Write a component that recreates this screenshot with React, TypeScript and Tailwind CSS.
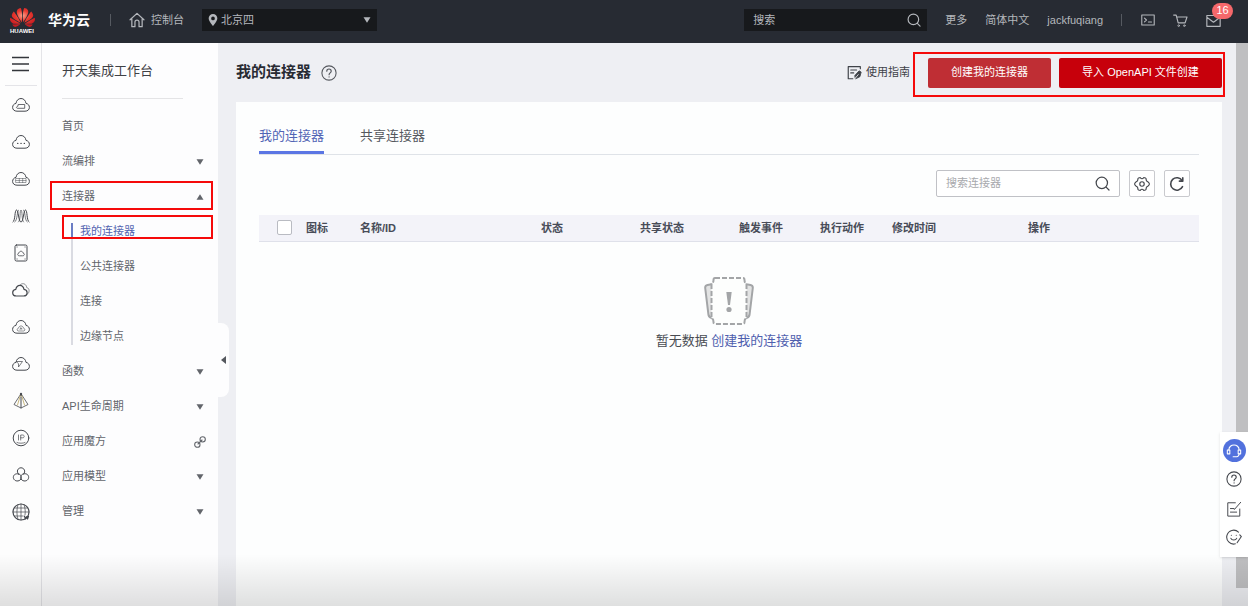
import type { ReactNode } from "react";
import { SiHuawei } from "react-icons/si";

type IconProps = { className?: string; children?: ReactNode };

function Icon({ className = "size-[18px]", children }: IconProps) {
  return (
    <svg
      viewBox="0 0 18 18"
      className={className}
      fill="none"
      stroke="currentColor"
      strokeWidth="1"
      strokeLinecap="round"
      strokeLinejoin="round"
      aria-hidden="true"
    >
      {children}
    </svg>
  );
}

const cloud =
  "M4.600 15.200C2.200 15.200.6 13.500.6 11.400 .6 9.300 2 7.700 4 7.400 4.400 4.400 6.400 2.500 9 2.500S13.600 4.400 14 7.400C16 7.700 17.400 9.300 17.400 11.400 17.400 13.500 15.800 15.200 13.400 15.200Z";

const services = [
  {
    name: "弹性云服务器",
    icon: (
      <>
        <path d={cloud} />
        <path d="M6.500 8.500h6.200v3.800H5.500c-1.400 0-1.400-1.900 0-2z" strokeWidth=".8" />
      </>
    ),
  },
  {
    name: "云耀服务器",
    icon: (
      <>
        <path d={cloud} />
        <path d="M5.700 10.400h.1M9 10.400h.1M12.300 10.400h.1" strokeWidth="1.400" />
      </>
    ),
  },
  {
    name: "裸金属服务器",
    icon: (
      <>
        <path d={cloud} />
        <path d="M4 8.500h10v4H4zM7.300 8.500v4M10.700 8.500v4M4 10.500h10" strokeWidth=".5" />
      </>
    ),
  },
  {
    name: "弹性伸缩",
    icon: (
      <>
        <path d="M1 15c2.500-1 1.500-12 3.500-12S6.500 15 9 15s2.500-12 4.500-12S14.500 14 17 15" />
        <path d="M2.800 15C5.500 14 5 3 6.500 3M6.500 15C9 13.500 7.500 3 9 3s.5 10.500 2.500 12M11.500 3c2 0 1 11 3.700 12" strokeWidth=".7" />
      </>
    ),
  },
  {
    name: "镜像服务",
    icon: (
      <>
        <rect x="3" y="1" width="12" height="16" rx="1.500" />
        <path d="M7 11.800c-1.800 0-1.800-2.500-.1-2.700.5-2.500 3.700-2.500 4.200 0 1.700.2 1.700 2.700-.1 2.700z" strokeWidth=".8" />
        <path d="M5 3h.1M13 3h.1M5 15h.1M13 15h.1" />
      </>
    ),
  },
  {
    name: "云硬盘",
    icon: (
      <>
        <path d="M4.200 15C-.4 15-.4 8.900 3.800 8.400 4.800 2.900 11 2.900 12 8.400 16.200 8.900 16.200 15 11.600 15Z" strokeWidth="1.200" />
        <path d="M8.500 3.500c2.500-2 5.700-.5 6.200 3 3.200.8 3.200 5.500.4 6.800" strokeWidth=".6" />
      </>
    ),
  },
  {
    name: "对象存储",
    icon: (
      <>
        <path d={cloud} />
        <path d="M7.500 13h-1c-1.800 0-1.800-2.600 0-2.800.5-3 4.500-3 5 0 1.800.2 1.800 2.800 0 2.800h-1M9 13.500V10M7.800 11 9 9.800l1.200 1.200" strokeWidth=".6" />
      </>
    ),
  },
  {
    name: "内容分发",
    icon: (
      <>
        <path d={cloud} />
        <path d="M4.500 6.500h6L6.500 12V9z" strokeWidth=".7" />
      </>
    ),
  },
  {
    name: "虚拟私有云",
    icon: (
      <>
        <path d="M8.500 2.500 2 12.500 9 16l7-3.500-6.500-10" strokeWidth=".8" />
        <path d="m8.500 3-3 10M9.500 3l3 10" stroke="#c2b070" strokeWidth=".9" />
        <path d="M9 5v11" strokeWidth="1" />
        <path d="M9 1.800v1" strokeWidth="2.200" />
      </>
    ),
  },
  {
    name: "弹性公网IP",
    icon: (
      <>
        <circle cx="9" cy="9" r="7.800" />
        <path d="M6.500 11v-5M8.700 11v-5h2c2 0 2 2.800 0 2.800h-2M5 13.500c2 1 6 1 8 0" strokeWidth=".7" />
      </>
    ),
  },
  {
    name: "应用模型",
    icon: (
      <path d="M6.500 8C4 5.500 5.800 1.800 9 1.800S14 5.500 11.500 8C15 6.800 17.300 9.800 16.500 12.300 15.500 15.500 11 16 9 13 7 16 2.500 15.500 1.500 12.300.7 9.800 3 6.800 6.500 8ZM9 13C8.300 11.500 8.700 10.700 9 10.200 9.300 10.700 9.700 11.500 9 13ZM6.500 8C8 8 8.700 9 9 10.200 9.300 9 10 8 11.500 8" />
    ),
  },
  {
    name: "域名注册",
    icon: (
      <>
        <circle cx="9" cy="9" r="8" strokeWidth="1.200" />
        <path d="M6 1.700C4.500 6 4.500 12 6 16.300M12 1.700c1.300 3.600 1.500 7 1 10.300M9 1v16M1 9h16M2.200 5h13.600M2.200 13h9" strokeWidth=".7" />
        <path d="m12.500 13.200 1 2.800 1-2.300 1 2.300 1-2.800" strokeWidth="1.200" />
      </>
    ),
  },
];

const connectorLinks = ["我的连接器", "公共连接器", "连接", "边缘节点"];

const columns = [
  { label: "图标", width: "w-[54px]" },
  { label: "名称/ID", width: "w-[181px]" },
  { label: "状态", width: "w-[99px]" },
  { label: "共享状态", width: "w-[99px]" },
  { label: "触发事件", width: "w-[81px]" },
  { label: "执行动作", width: "w-[72px]" },
  { label: "修改时间", width: "w-[136px]" },
  { label: "操作", width: "" },
];

function Caret({ up = false }: { up?: boolean }) {
  return (
    <svg viewBox="0 0 8 6" className="h-1.5 w-2" fill="currentColor" aria-hidden="true">
      <path d={up ? "M4 .3 7.500 5.700h-7z" : "M.5.3h7L4 5.700z"} />
    </svg>
  );
}

function SearchIcon({ className }: IconProps) {
  return (
    <Icon className={className}>
      <circle cx="8.200" cy="8.200" r="6.800" strokeWidth="1.500" />
      <path d="m13.300 13.300 3.500 3.500" strokeWidth="1.500" />
    </Icon>
  );
}

function HelpIcon({ className }: IconProps) {
  return (
    <Icon className={className}>
      <circle cx="9" cy="9" r="8" strokeWidth="1.200" />
      <path d="M6.500 7c0-3.400 5-3.300 5-.1 0 1.900-2.400 2-2.400 4M9.100 13.200v.2" strokeWidth="1.300" />
    </Icon>
  );
}

function Highlight({ className }: { className: string }) {
  return <span className={`pointer-events-none absolute border-2 border-[#f50a0a] ${className}`} />;
}

function TopBar() {
  return (
    <header className="flex h-[43px] shrink-0 items-center bg-[#272b33] pb-[3px] text-[11px] text-[#b4b7bc]">
      <a href="#" className="ml-2 flex w-7 flex-col items-center" aria-label="HUAWEI">
        <svg className="absolute size-0" aria-hidden="true">
          <defs>
            <radialGradient id="petal" cx="50%" cy="40%" r="60%">
              <stop offset="0" stopColor="#f9a08a" />
              <stop offset=".45" stopColor="#ea3b30" />
              <stop offset="1" stopColor="#c41920" />
            </radialGradient>
          </defs>
        </svg>
        <SiHuawei className="-mb-1 size-[25px]" fill="url(#petal)" />
        <span className="text-[6px] leading-[10px] font-bold text-white">HUAWEI</span>
      </a>
      <a href="#" className="ml-3 text-[14px] font-bold text-white">
        华为云
      </a>
      <span className="ml-5 h-3 w-px bg-[#565a61]" />
      <a href="#" className="ml-[18px] flex items-center gap-1.5">
        <Icon className="size-4">
          <path d="M1.200 8.800 9 1.500l7.800 7.300M3.200 7.500v9h3.500v-5c0-3 4.600-3 4.600 0v5h3.500v-9" strokeWidth="1.400" />
        </Icon>
        控制台
      </a>
      <div className="relative ml-[18px] flex h-[22px] w-[175px] items-center bg-[#17191c]">
        <svg viewBox="0 0 10 13" className="absolute left-1.5 h-3 w-2.5" fill="currentColor" aria-hidden="true">
          <path fillRule="evenodd" d="M5 0a4.700 4.700 0 0 1 4.700 4.700C9.700 8 5 13 5 13S.3 8 .3 4.700A4.700 4.700 0 0 1 5 0m0 2.800a2 2 0 1 0 0 4 2 2 0 0 0 0-4" />
        </svg>
        <select aria-label="区域" className="h-full w-full appearance-none bg-transparent pl-[19px] outline-none">
          <option>北京四</option>
        </select>
        <span className="pointer-events-none absolute right-1.5">
          <Caret />
        </span>
      </div>
      <div className="ml-auto flex h-[22px] w-[183px] items-center bg-[#17191c] pr-1.5 pl-[9px]">
        <input
          type="search"
          aria-label="搜索"
          placeholder="搜索"
          className="min-w-0 flex-1 bg-transparent outline-none placeholder:text-[#b4b7bc]"
        />
        <button type="button" aria-label="搜索">
          <SearchIcon className="size-3.5" />
        </button>
      </div>
      <a href="#" className="ml-[18px]">更多</a>
      <a href="#" className="ml-[18px]">简体中文</a>
      <a href="#" className="ml-[18px]">jackfuqiang</a>
      <span className="ml-[18px] h-3 w-px bg-[#565a61]" />
      <button type="button" aria-label="CloudShell" className="ml-[19px]">
        <Icon className="size-3.5">
          <path d="M1 2.500h16v13H1zM4.500 6.500 7 9l-2.500 2.500M9.500 11.500h4" strokeWidth="1.400" />
        </Icon>
      </button>
      <a href="#" aria-label="购物车" className="ml-[18px]">
        <Icon className="size-[15px]">
          <path d="M.8 2.500h3l2.400 9.300h8.300l2.300-7H4.500" strokeWidth="1.400" />
          <circle cx="6.800" cy="15.200" r="1" />
          <circle cx="13.600" cy="15.200" r="1" />
        </Icon>
      </a>
      <a href="#" aria-label="消息" className="relative mr-[27px] ml-[18px]">
        <Icon className="size-[15px]">
          <path d="M1 3h16v13H1zM1 5l8 6 8-6" strokeWidth="1.400" />
        </Icon>
        <span className="absolute -top-2.5 left-1.5 flex h-4 w-[21px] items-center justify-center rounded-full bg-[#f5686b] text-[11px] text-white">
          16
        </span>
      </a>
    </header>
  );
}

function ServiceRail() {
  return (
    <aside className="flex w-[42px] shrink-0 flex-col items-center border-r border-[#e4e4e8] bg-[#fdfdfd] text-[#45484e]">
      <button type="button" aria-label="服务列表" className="flex h-[43px] w-8 items-center justify-center border-b border-[#e4e4e8] text-[#33363b]">
        <svg viewBox="0 0 18 16" className="h-4 w-[18px]" stroke="currentColor" strokeWidth="1.700" aria-hidden="true">
          <path d="M0 1.500h17M0 8h17M0 14.500h17" />
        </svg>
      </button>
      <ul>
        {services.map((service) => (
          <li key={service.name}>
            <a href="#" aria-label={service.name} className="flex h-[37px] items-center">
              <Icon>{service.icon}</Icon>
            </a>
          </li>
        ))}
      </ul>
    </aside>
  );
}

function MenuItem({ label, mark, children }: { label: string; mark?: ReactNode; children?: ReactNode }) {
  return (
    <a href="#" className="relative flex h-[35px] items-center justify-between pr-3 pl-5">
      {label}
      <span className="flex w-3 justify-center">{mark}</span>
      {children}
    </a>
  );
}

function SideMenu() {
  return (
    <aside className="relative w-44 shrink-0 bg-[#fdfdfe] text-[11px] text-[#62656b]">
      <h2 className="mr-[35px] ml-5 flex h-14 items-center border-b border-[#e4e4e6] text-[13px] text-[#3f4146]">
        开天集成工作台
      </h2>
      <nav className="mt-2.5">
        <MenuItem label="首页" />
        <MenuItem label="流编排" mark={<Caret />} />
        <MenuItem label="连接器" mark={<Caret up />}>
          <Highlight className="top-[2px] right-[5px] left-2 h-[29px]" />
        </MenuItem>
        <div className="flex pl-[29px]">
          <div className="my-[9px] w-0.5 bg-[#dadbe2]">
            <div className="h-4 bg-[#6a7cc4]" />
          </div>
          <ul className="flex-1">
            {connectorLinks.map((label, i) => (
              <li key={label} className="relative">
                <a
                  href="#"
                  className={i === 0 ? "flex h-[35px] items-center pl-[7px] text-[#5264b0]" : "flex h-[35px] items-center pl-[7px]"}
                >
                  {label}
                </a>
                {i === 0 && <Highlight className="top-px right-[5px] -left-[11px] h-6" />}
              </li>
            ))}
          </ul>
        </div>
        <MenuItem label="函数" mark={<Caret />} />
        <MenuItem label="API生命周期" mark={<Caret />} />
        <MenuItem
          label="应用魔方"
          mark={
            <Icon className="size-3">
              <circle cx="5" cy="13" r="4" strokeWidth="1.600" />
              <circle cx="13" cy="5" r="4" strokeWidth="1.600" />
              <path d="m6 12 6-6" strokeWidth="1.600" />
            </Icon>
          }
        />
        <MenuItem label="应用模型" mark={<Caret />} />
        <MenuItem label="管理" mark={<Caret />} />
      </nav>
      <button
        type="button"
        aria-label="收起菜单"
        className="absolute top-[280px] -right-[11px] flex h-[74px] w-[11px] items-center justify-center rounded-r-lg bg-[#fdfdfe]"
      >
        <svg viewBox="0 0 5 8" className="h-2 w-[5px]" fill="#55585e" aria-hidden="true">
          <path d="M5 0v8L0 4z" />
        </svg>
      </button>
    </aside>
  );
}

function PageHeader() {
  return (
    <div className="flex h-[59px] items-center">
      <h1 className="text-[15px] font-bold text-[#282b33]">我的连接器</h1>
      <button type="button" aria-label="帮助" className="ml-2.5 text-[#55585e]">
        <HelpIcon className="size-4" />
      </button>
      <a href="#" className="mr-[18px] ml-auto flex items-center gap-1 text-[11px] text-[#3f4248]">
        <Icon className="size-[15px]">
          <path d="M16 4.500V2H1.500v14.500h5.500M4.500 6h7M4.500 9.500H8" strokeWidth="1.400" />
          <path d="m9.500 12.500 5-5.500 2.500 1.500-1.500 5.500-5 2.500z" fill="currentColor" />
          <path d="m9 17 4.500-5.500" stroke="#eeeff3" />
        </Icon>
        使用指南
      </a>
      <div className="relative flex gap-2 text-[11px] text-white">
        <button type="button" className="h-[30px] w-[123px] rounded-xs bg-[#bf2e34]">
          创建我的连接器
        </button>
        <button type="button" className="h-[30px] w-[163px] rounded-xs bg-[#c7000b]">
          导入 OpenAPI 文件创建
        </button>
        <Highlight className="-top-1.5 -right-[3px] -bottom-[9px] -left-[15px]" />
      </div>
    </div>
  );
}

function ConnectorTable() {
  return (
    <table className="mt-[18px] w-full table-fixed text-left text-[11px]">
      <thead>
        <tr className="h-[26px] border-b border-[#dfe1ea] bg-[#f3f3f9] text-[#484c58]">
          <th className="w-[47px] pl-[18px]">
            <input
              type="checkbox"
              aria-label="全选"
              className="block size-[15px] appearance-none rounded-xs border border-[#b9bbc2] bg-white"
            />
          </th>
          {columns.map((column) => (
            <th key={column.label} className={`font-bold ${column.width}`}>
              {column.label}
            </th>
          ))}
        </tr>
      </thead>
      <tbody>
        <tr>
          <td colSpan={9} className="pt-[34px] text-center text-[13px] text-[#494c52]">
            <svg viewBox="0 0 50 50" className="mx-auto mb-[5px] size-[50px]" fill="none" stroke="#a3a5a7" strokeWidth="2" aria-hidden="true">
              <path d="M9 8 3.500 9Q1 9.500 1.200 12l3.300 27q.5 2.500 4.500 3.500zM41 8l5.500 1q2.500.5 2.300 3l-3.300 27q-.5 2.500-4.500 3.500z" fill="#e2e3e3" />
              <path
                d="M11 2h28q1.500 0 1.500 2 0 3 2 4v34q-2 1-2 4 0 2-1.500 2H11q-1.500 0-1.500-2 0-3-2-4V8q2-1 2-4 0-2 1.500-2z"
                fill="#fdfefd"
                strokeDasharray="5 2"
              />
              <path d="M22.300 16h5.400l-1.700 13h-2z" fill="#a3a5a7" stroke="none" />
              <circle cx="25" cy="33.500" r="2.600" fill="#a3a5a7" stroke="none" />
            </svg>
            暂无数据{" "}
            <a href="#" className="text-[#4f60ae]">
              创建我的连接器
            </a>
          </td>
        </tr>
      </tbody>
    </table>
  );
}

function ConnectorPanel() {
  return (
    <section className="flex-1 bg-[#fdfefe] px-[23px]">
      <div role="tablist" className="flex h-[53px] items-end gap-9 border-b border-[#dfe3e8] text-[13px]">
        <button type="button" role="tab" aria-selected="true" className="h-[34px] border-b-3 border-[#5b76e4] text-[#5265b5]">
          我的连接器
        </button>
        <button type="button" role="tab" aria-selected="false" className="h-[34px] border-b-3 border-transparent text-[#55585e]">
          共享连接器
        </button>
      </div>
      <div className="mt-[15px] mr-[9px] flex justify-end gap-[9px] text-[#44474d]">
        <div className="flex h-[27px] w-[184px] items-center rounded-xs border border-[#c0c1c6] bg-white px-[9px] text-[11px]">
          <input
            type="search"
            aria-label="搜索连接器"
            placeholder="搜索连接器"
            className="min-w-0 flex-1 outline-none placeholder:text-[#a8a9ad]"
          />
          <button type="button" aria-label="搜索">
            <SearchIcon className="size-[15px]" />
          </button>
        </div>
        <button type="button" aria-label="设置" className="flex h-[27px] w-[26px] items-center justify-center rounded-xs border border-[#c9cace] bg-white">
          <Icon className="size-4">
            <path
              d="M5.200 2.200 7 1.800Q9 4.200 11 1.800L12.800 2.200 13.600 3Q13.300 6 16 6.800L17.200 8.300V9.700L16 11.200Q13.300 12 13.600 15L12.800 15.800 11 16.200Q9 13.800 7 16.200L5.200 15.800 4.400 15Q4.700 12 2 11.200L.8 9.700V8.300L2 6.800Q4.700 6 4.400 3Z"
              strokeWidth="1.200"
            />
            <circle cx="9" cy="9" r="2.500" strokeWidth="1.300" />
          </Icon>
        </button>
        <button type="button" aria-label="刷新" className="flex h-[27px] w-[26px] items-center justify-center rounded-xs border border-[#c9cace] bg-white">
          <Icon className="size-4">
            <path d="M15.200 12A7 7 0 1 1 14.800 5.200M15.500 2v3.800h-3.800" strokeWidth="1.800" />
          </Icon>
        </button>
      </div>
      <ConnectorTable />
    </section>
  );
}

function SupportDock() {
  return (
    <div className="absolute right-0 bottom-[49px] flex h-[125px] w-7 flex-col items-center bg-white pt-[7px] text-[#45484e] shadow-sm">
      <button type="button" aria-label="在线客服" className="flex size-[23px] items-center justify-center rounded-full bg-[#5271dd] text-white">
        <Icon className="size-4">
          <path d="M3.200 8C3.200.3 14.800.3 14.800 8M14.800 12c0 2.500-2 3.500-4.500 3.500M8 15.500h2" strokeWidth="1.200" />
          <path d="M1.500 7.800h2.800v4.400H1.500zM13.700 7.800h2.800v4.400h-2.800z" strokeWidth="1.200" />
        </Icon>
      </button>
      <button type="button" aria-label="帮助" className="mt-[9px]">
        <HelpIcon className="size-4" />
      </button>
      <button type="button" aria-label="建议" className="mt-3.5">
        <Icon className="size-4">
          <path d="M10.500 2H2v15h13.500V9M5 8.500h4M5 12.500h7M9.500 9.500l7-8" strokeWidth="1.100" />
        </Icon>
      </button>
      <button type="button" aria-label="评价" className="mt-3">
        <Icon className="size-4">
          <path d="M14 3.500A7.800 7.800 0 1 0 10.500 16.700M15.500 6.500l1.800 2-4.800 7M5.500 10.500c1 2.500 5.500 2.500 6.500 0M6 7h.1M11.500 7h.1" strokeWidth="1.200" />
        </Icon>
      </button>
    </div>
  );
}

export default function App() {
  return (
    <div className="relative flex min-h-screen flex-col bg-[#eeeff3] font-['Liberation_Sans','Noto_Sans_CJK_SC',sans-serif]">
      <TopBar />
      <div className="flex flex-1">
        <ServiceRail />
        <SideMenu />
        <main className="flex min-w-0 flex-1 flex-col pr-3.5 pl-[18px]">
          <PageHeader />
          <ConnectorPanel />
        </main>
        <div className="mb-[18px] w-3 shrink-0 bg-[#bfbfc1]" />
      </div>
      <div className="pointer-events-none absolute inset-x-0 bottom-0 h-[52px] bg-linear-to-b from-black/0 to-black/12" />
      <SupportDock />
    </div>
  );
}
